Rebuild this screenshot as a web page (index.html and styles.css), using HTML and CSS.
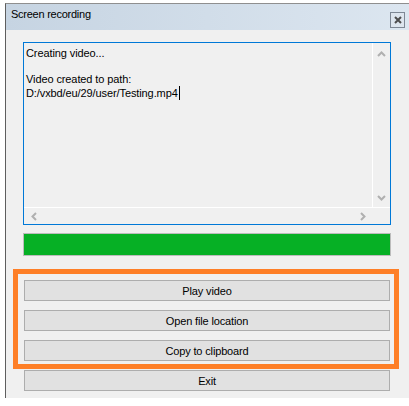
FILE: index.html
```html
<!DOCTYPE html>
<html>
<head>
<meta charset="utf-8">
<link rel="stylesheet" href="styles.css">
</head>
<body>
<div class="window">
  <div class="titlebar">
    <span class="title">Screen recording</span>
    <span class="close"><svg width="8" height="8" viewBox="0 0 8 8"><path d="M1 1L7 7M7 1L1 7" stroke="#4d4d4d" stroke-width="2" fill="none"/></svg></span>
  </div>
  <div class="content">
    <div class="textbox">
      <div class="tb-main">
        <div class="tb-text">Creating video...<br><br>Video created to path:<br>D:/vxbd/eu/29/user/Testing.mp4<span class="caret"></span></div>
        <div class="vscroll">
          <svg width="9" height="6" viewBox="0 0 9 6"><path d="M1 5L4.5 1.5L8 5" stroke="#b0b0b0" stroke-width="2" fill="none"/></svg>
          <svg width="9" height="6" viewBox="0 0 9 6"><path d="M1 1L4.5 4.5L8 1" stroke="#b0b0b0" stroke-width="2" fill="none"/></svg>
        </div>
      </div>
      <div class="tb-bottom">
        <div class="hscroll">
          <svg width="6" height="9" viewBox="0 0 6 9"><path d="M5 1L1.5 4.5L5 8" stroke="#b0b0b0" stroke-width="2" fill="none"/></svg>
          <svg width="6" height="9" viewBox="0 0 6 9"><path d="M1 1L4.5 4.5L1 8" stroke="#b0b0b0" stroke-width="2" fill="none"/></svg>
        </div>
        <div class="corner"></div>
      </div>
    </div>
    <div class="progress"><div class="fill" style="width:100%"></div></div>
    <div class="buttons">
      <div class="highlight"></div>
      <div class="btn">Play video</div>
      <div class="btn">Open file location</div>
      <div class="btn">Copy to clipboard</div>
      <div class="btn">Exit</div>
    </div>
  </div>
</div>
</body>
</html>
```

FILE: styles.css
```css
html, body {
  margin: 0;
  padding: 0;
  background: #ffffff;
}
body {
  font-family: "Liberation Sans", Arial, sans-serif;
  font-size: 11px;
  color: #000;
}
.window {
  margin-top: 3px;
  margin-left: 5px;
  width: 403px;
  height: 394px;
  border-left: 1px solid #5e5e5e;
  border-top: 1px solid #8f8f8f;
  background: #f0f0f0;
  display: flex;
  flex-direction: column;
}
.titlebar {
  height: 26px;
  display: flex;
  align-items: flex-start;
  justify-content: space-between;
  background: linear-gradient(to right, #c6d4e2, #dce6f0);
  padding: 4px 4px 0 5px;
  box-sizing: border-box;
}
.title {
  line-height: 13px;
  letter-spacing: -0.25px;
  color: #000;
}
.close {
  margin-top: 4px;
  width: 13px;
  height: 14px;
  border: 1px solid #7d8794;
  background: #dde5ee;
  display: flex;
  align-items: center;
  justify-content: center;
}
.content {
  padding: 12px 0 0 17px;
  display: flex;
  flex-direction: column;
}
.textbox {
  width: 366px;
  height: 181px;
  border: 1px solid #0078d7;
  display: flex;
  flex-direction: column;
  background: #f0f0f0;
}
.tb-main {
  display: flex;
  height: 164px;
  border-bottom: 1px solid #ffffff;
}
.tb-text {
  width: 344px;
  padding: 4px 2px;
  line-height: 13px;
  letter-spacing: -0.1px;
  border-right: 1px solid #ffffff;
}
.caret {
  display: inline-block;
  width: 1px;
  height: 14px;
  background: #000;
  vertical-align: -3px;
  margin-left: 1px;
}
.vscroll {
  width: 17px;
  display: flex;
  flex-direction: column;
  justify-content: space-between;
  align-items: center;
  padding: 8px 0 6px;
  box-sizing: border-box;
}
.tb-bottom {
  display: flex;
  height: 16px;
}
.hscroll {
  width: 349px;
  display: flex;
  justify-content: space-between;
  align-items: center;
  padding: 0 7px 0 7px;
  box-sizing: border-box;
}
.corner {
  width: 17px;
}
.progress {
  margin-top: 8px;
  width: 368px;
  height: 23px;
  box-sizing: border-box;
  border: 1px solid #bcbcbc;
  background: #e6e6e6;
}
.fill {
  height: 100%;
  background: #06b025;
}
.buttons {
  position: relative;
  margin-top: 24px;
  margin-left: 1px;
  width: 366px;
  display: flex;
  flex-direction: column;
  gap: 9px;
}
.btn {
  height: 21px;
  box-sizing: border-box;
  border: 1px solid #adadad;
  background: #e1e1e1;
  display: flex;
  align-items: center;
  justify-content: center;
  letter-spacing: -0.15px;
}
.highlight {
  position: absolute;
  left: -11px;
  top: -11px;
  width: 386px;
  height: 100px;
  box-sizing: border-box;
  border: 5px solid #fe7f27;
  pointer-events: none;
}
```
